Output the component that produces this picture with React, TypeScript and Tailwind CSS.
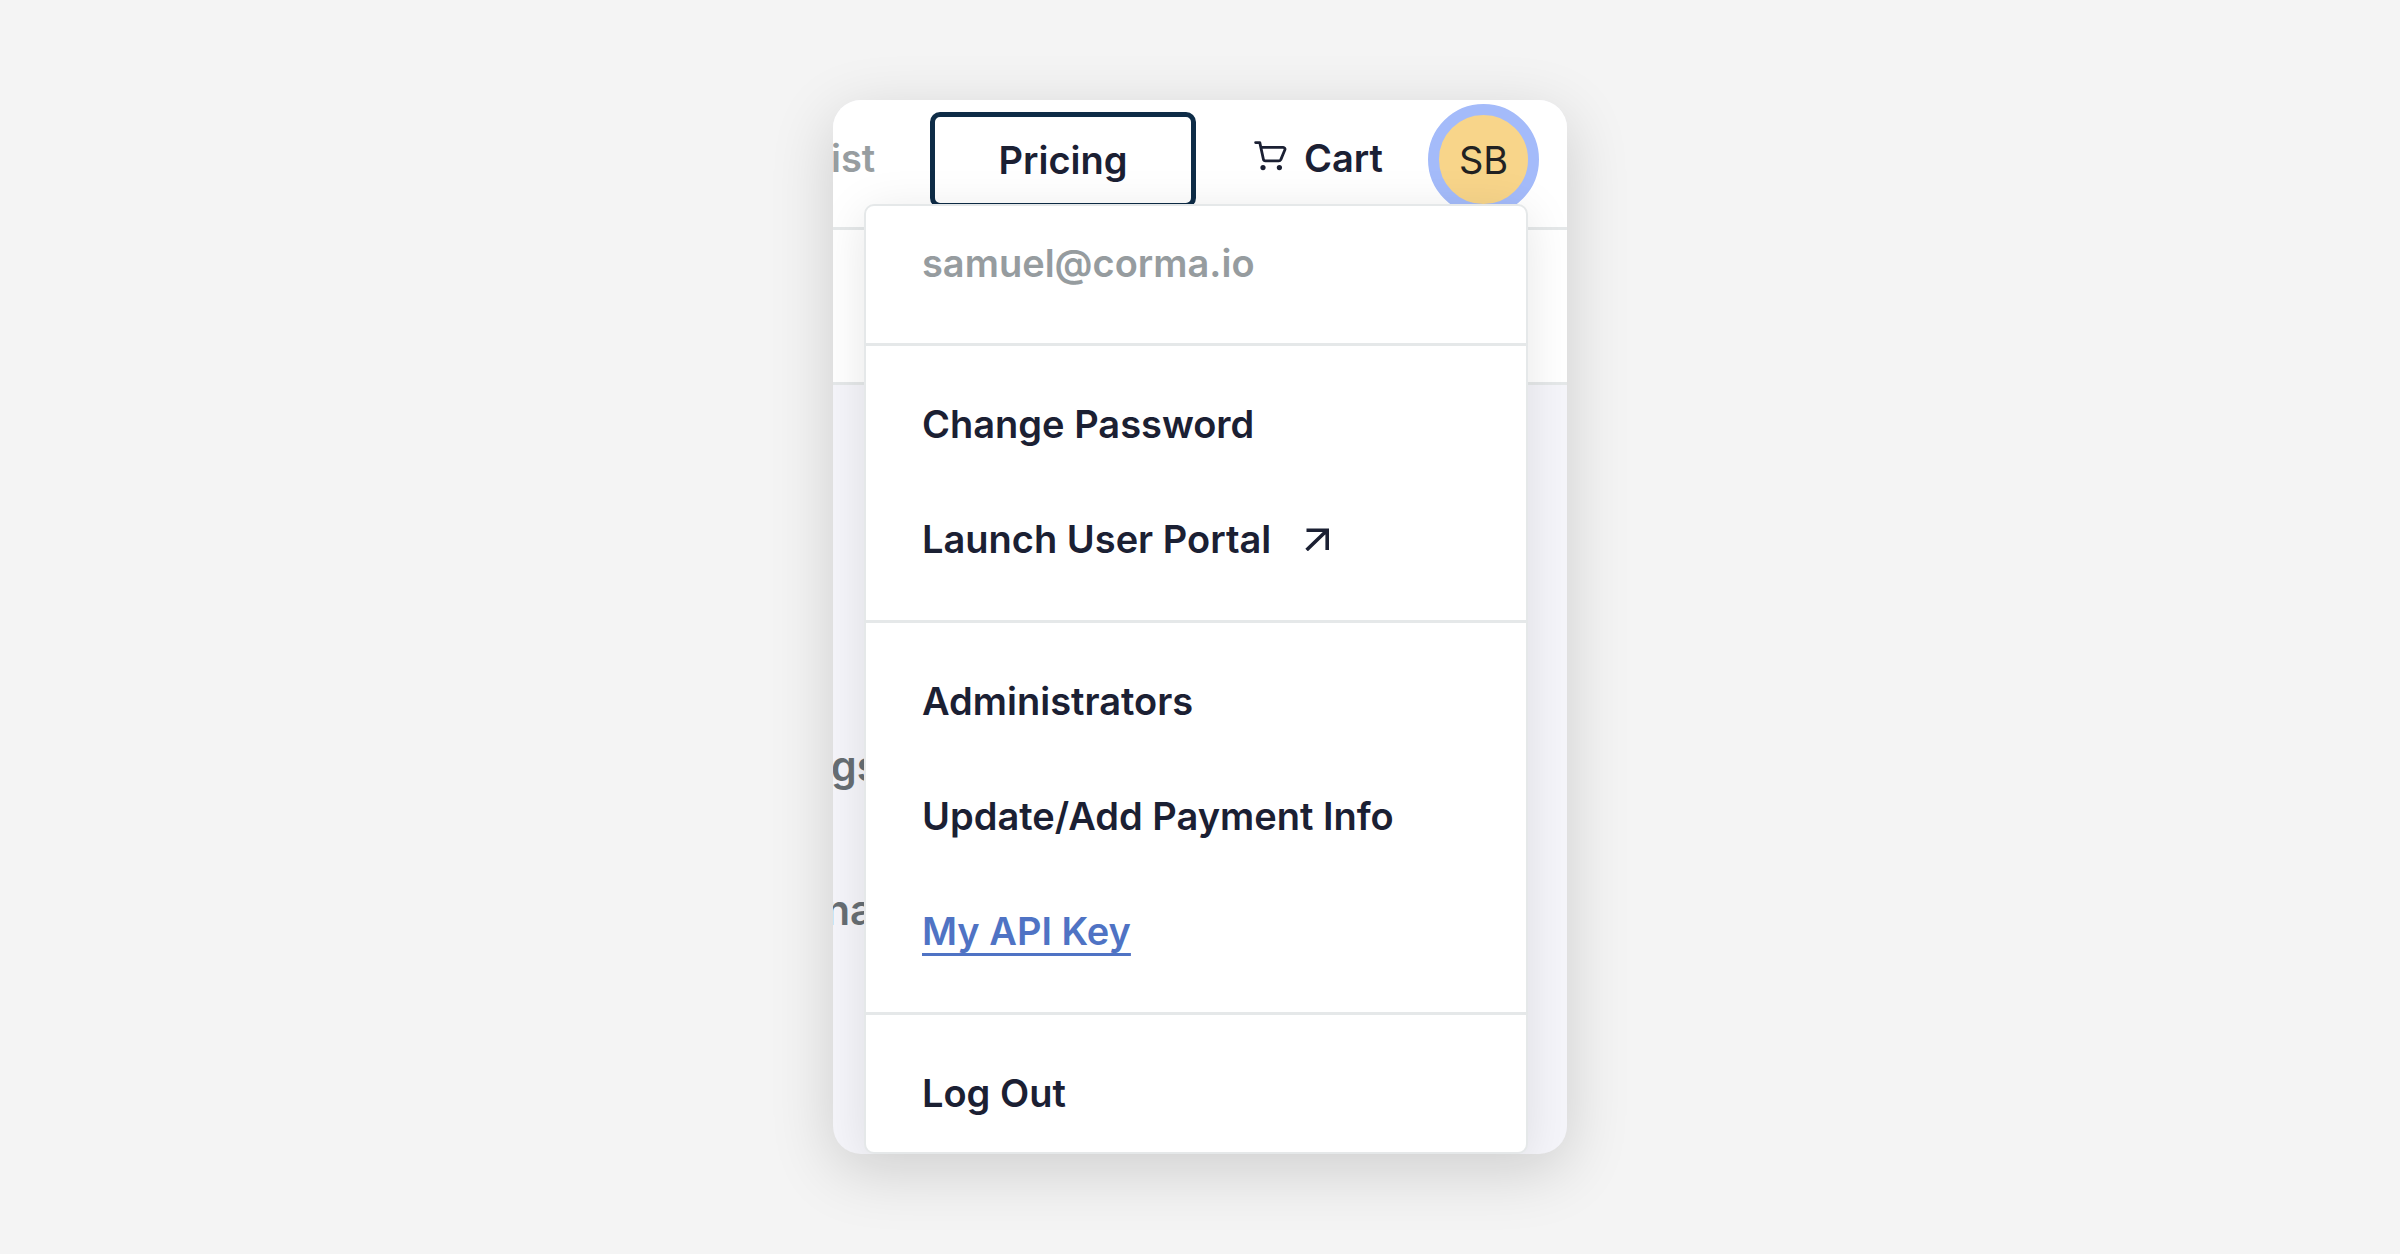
import { ReactNode } from "react";

function CartIcon() {
  return (
    <svg
      viewBox="0 0 33 30"
      className="mb-1 h-[30px] w-[33px] shrink-0"
      fill="none"
      stroke="currentColor"
      strokeWidth="2.8"
      strokeLinecap="round"
      strokeLinejoin="round"
      aria-hidden="true"
    >
      <path d="M1.6 1.6h4.2l3.6 16.6a2 2 0 0 0 2 1.6h13.4a2.4 2.4 0 0 0 2-1.2l4-9.6a1.8 1.8 0 0 0-1.6-2.6H7.2" />
      <circle cx="9" cy="26.6" r="2.6" fill="currentColor" stroke="none" />
      <circle cx="25.4" cy="26.6" r="2.6" fill="currentColor" stroke="none" />
    </svg>
  );
}

function ArrowIcon() {
  return (
    <svg
      viewBox="0 0 24 24"
      className="h-6 w-6 shrink-0"
      fill="none"
      stroke="currentColor"
      strokeWidth="3.6"
      aria-hidden="true"
    >
      <path d="M1.5 3.3h20.7V23M21.6 3.8 1.6 23" />
    </svg>
  );
}

function MenuSection({ children, className = "" }: { children: ReactNode; className?: string }) {
  return <ul className={`border-[#e5e8e9] px-14 ${className}`}>{children}</ul>;
}

function MenuItem({ label, active, icon }: { label: string; active?: boolean; icon?: ReactNode }) {
  return (
    <li className="flex h-[115px] items-center">
      <a
        href="#"
        className={
          active
            ? "text-[#4f73c4] underline decoration-[3px] underline-offset-8 [text-decoration-skip-ink:none]"
            : "flex items-center gap-[34px]"
        }
      >
        {label}
        {icon}
      </a>
    </li>
  );
}

export default function App() {
  return (
    <main className="flex min-h-screen items-center justify-center bg-[#f4f4f4] font-['Inter',sans-serif] text-[38px] leading-[46px] font-semibold text-[#1b2033]">
      <div className="grid w-full max-w-[734px] overflow-hidden rounded-[28px] bg-[#f5f5fa] shadow-[0_16px_64px_rgba(0,0,0,0.16)]">
        {/* Page behind the menu */}
        <div className="col-start-1 row-start-1">
          <header className="flex h-[130px] items-start border-b-3 border-[#e5e8e9] bg-white">
            <a href="#" className="-ml-0.5 w-[99px] pt-[35px] text-[#979da0]">
              ist
            </a>
            <button className="mt-3 h-24 w-[266px] rounded-[10px] border-[5px] border-[#0e2c47]">
              Pricing
            </button>
            <a href="#" className="ml-[58px] flex items-center gap-[17px] pt-[35px]">
              <CartIcon />
              Cart
            </a>
            <button className="mt-1 mr-7 ml-auto size-[111px] rounded-full border-[11px] border-[#a4bbfa] bg-[#f8d58a] font-normal text-[#222]">
              SB
            </button>
          </header>
          <div className="h-[155px] border-b-3 border-[#e5e8e9] bg-white" />
          <div className="flex flex-col gap-24 pt-[357px] text-[41px] leading-12 text-[#676e73]">
            <p className="-ml-0.5">gs</p>
            <p className="-ml-2">na</p>
          </div>
        </div>

        {/* Account menu */}
        <nav className="relative col-start-1 row-start-1 mt-[104px] mr-[39px] ml-[31px] rounded-[10px] border-2 border-[#e5e8e9] bg-white shadow-[0_8px_48px_rgba(0,0,0,0.1)]">
          <p className="flex h-[137px] items-start px-14 pt-[34px] text-[#969c9f]">
            samuel@corma.io
          </p>
          <MenuSection className="border-t-3 pt-5 pb-6">
            <MenuItem label="Change Password" />
            <MenuItem label="Launch User Portal" icon={<ArrowIcon />} />
          </MenuSection>
          <MenuSection className="border-t-3 pt-5 pb-6">
            <MenuItem label="Administrators" />
            <MenuItem label="Update/Add Payment Info" />
            <MenuItem label="My API Key" active />
          </MenuSection>
          <MenuSection className="border-t-3 pt-5 pb-0.5">
            <MenuItem label="Log Out" />
          </MenuSection>
        </nav>
      </div>
    </main>
  );
}
